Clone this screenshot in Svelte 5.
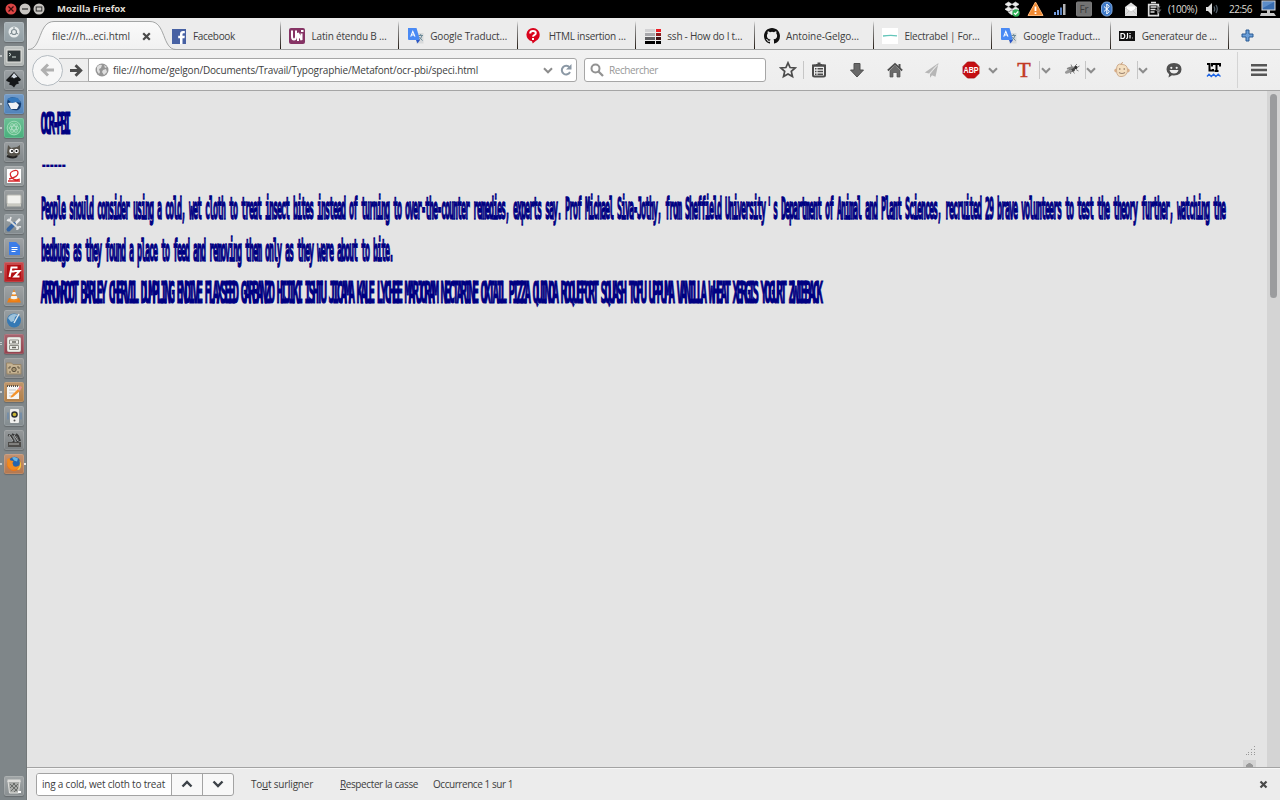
<script>
  const svg = (w, h, body, box = `0 0 ${w} ${h}`) =>
    `<svg xmlns="http://www.w3.org/2000/svg" width="${w}" height="${h}" viewBox="${box}">${body}</svg>`;

  // Spreads the letters of a label so that it fills the given width.
  function fit(node, width) {
    const range = document.createRange();
    range.selectNodeContents(node);
    const natural = range.getBoundingClientRect().width;
    const count = [...node.textContent].length;
    node.style.letterSpacing = `${(width - natural) / count}px`;
  }

  const translate = svg(16, 16, `<path d="M8 5h7.5v10.5H8z" fill="#d8dadb"/><path d="M0 0h8.5l3.500 12H1q-1 0-1-1z" fill="#4a8af4"/><path d="M8 12h4l-2.500 3.600z" fill="#2a56c6"/><path d="M2.700 8.600 4.800 3.400 7 8.600M3.400 7h2.900" stroke="#fff" fill="none" stroke-width="1.100"/><path d="M10.500 7.500h4.500M12.700 6v1.500M14 7.500q-1 3.500-3 4.500M11.300 9l3.200 3.600" stroke="#6d8a99" fill="none"/>`);

  const tabs = [
    { text: 'Facebook', w: 42, icon: svg(16, 15, `<path d="M1 0h14v15H1z" fill="#4761a3"/><path d="M9 15V9.300H7.200V6.800H9V5q0-3 3-3h1.800v2.300h-1.300q-1 0-1 1v1.500h2.300l-.3 2.500h-2V15z" fill="#fff"/>`) },
    { text: 'Latin étendu B …', w: 75, icon: svg(16, 16, `<rect width="16" height="16" rx="2" fill="#863465"/><path d="M3 2.500v6q0 3 2 3t2-3v-6M9 13V5l3.500 7V5.500" stroke="#fff" stroke-width="2" fill="none"/><path d="M12 2h2.500v2H12z" fill="#fff"/>`) },
    { text: 'Google Traduct…', w: 77, icon: translate },
    { text: 'HTML insertion …', w: 77, icon: svg(16, 16, `<path d="M7 0a6.600 6.600 0 0 1 6.700 6.700q0 4-3.700 6L6.700 15.500 6 13.300A6.700 6.700 0 0 1 7 0z" fill="#d9041d"/><path d="M4.200 5.500q0-2.400 2.800-2.400t2.800 2q0 1.400-1.500 2.100-1.200.6-1.200 1.600M7 10v2" stroke="#fff" stroke-width="2" fill="none"/>`) },
    { text: 'ssh - How do I t…', w: 75, icon: svg(16, 16, `<path d="M0 1h10v3H0z" fill="#d2d2d4"/><path d="M0 5h10v3H0z" fill="#a8a8ac"/><path d="M0 9h10v3H0z" fill="#606063"/><path d="M0 13h10v3H0z"/><path d="M11 1h5v3h-5z" fill="#ed1c24"/><path d="M11 5h5v3h-5z" fill="#8f1a1d"/><path d="M11 9h5v3h-5z" fill="#3b1112"/><path d="M11 13h5v3h-5z"/>`) },
    { text: 'Antoine-Gelgo…', w: 73, icon: svg(16, 16, `<path fill="#111" d="M8 0C3.58 0 0 3.58 0 8c0 3.54 2.29 6.53 5.47 7.59.4.07.55-.17.55-.38 0-.19-.01-.82-.01-1.49-2.01.37-2.53-.49-2.69-.94-.09-.23-.48-.94-.82-1.13-.28-.15-.68-.52-.01-.53.63-.01 1.08.58 1.23.82.72 1.21 1.87.87 2.33.66.07-.52.28-.87.51-1.07-1.78-.2-3.64-.89-3.64-3.95 0-.87.31-1.59.82-2.15-.08-.2-.36-1.02.08-2.12 0 0 .67-.21 2.2.82a7.6 7.6 0 0 1 4 0c1.53-1.04 2.2-.82 2.2-.82.44 1.1.16 1.92.08 2.12.51.56.82 1.27.82 2.15 0 3.07-1.87 3.75-3.65 3.95.29.25.54.73.54 1.48 0 1.07-.01 1.93-.01 2.2 0 .21.15.46.55.38A8 8 0 0 0 16 8c0-4.42-3.58-8-8-8z"/>`) },
    { text: 'Electrabel | For…', w: 75, icon: svg(16, 16, `<path d="M0 0h16v16H0z" fill="#fff"/><path d="M1 8q7-1 14-.2" stroke="#62c5b9" stroke-width="1.300" fill="none"/>`) },
    { text: 'Google Traduct…', w: 77, icon: translate },
    { text: 'Generateur de …', w: 75, icon: svg(16, 16, `<path d="M0 3h16v10H0z" fill="#101010"/><path d="M2 5.500h1.500q2.300 0 2.300 2.500T3.500 10.500H2zM8.500 5v4.500q0 1-1.500 1M11 7v3.500M11 5v1" stroke="#fff" stroke-width="1.200" fill="none"/><path d="M13 10h1" stroke="#aaa"/>`) },
  ];

  const chevron = svg(10, 7, `<path d="M1 1.200 5 5.300 9 1.200" fill="none" stroke="#8c8c8c" stroke-width="2"/>`);
  const sep = svg(1, 20, `<path d="M0 1h1v18H0z" fill="#c6c6c6"/>`);

  const tools = [
    { w: 24, icon: svg(18, 18, `<path d="m9 1.800 2.100 4.700 5.100.5-3.900 3.400 1.200 5.100L9 12.900l-4.500 2.600 1.200-5.100L1.800 7l5.100-.5z" fill="none" stroke="#4b4b4b" stroke-width="1.700"/>`) },
    { w: 7, icon: sep },
    { w: 24, icon: svg(16, 16, `<path d="M5 3.500V2h1.500V.5h3V2H11v1.500z" fill="#4b4b4b"/><rect x="2" y="3.500" width="12" height="11" rx="1.500" fill="#eee" stroke="#4b4b4b" stroke-width="2"/><path d="M1 2.500h14v2H1zM4 6h1.500v1.500H4zm2.500 0H12v1.500H6.500zM4 8.700h1.500v1.500H4zm2.500 0H12v1.500H6.500zM4 11.400h1.500v1.500H4zm2.500 0H12v1.500H6.500z" fill="#4b4b4b"/>`) },
    { w: 52, icon: svg(16, 16, `<path d="M5 1.500h6V8h3.500L8 15 1.500 8H5z" fill="#686868" stroke="#505050"/>`) },
    { w: 24, icon: svg(16, 16, `<path d="M3 8.500 8 4l5 4.500V15h-3v-4.500H6V15H3z" fill="#6b6b6b" stroke="#505050" stroke-width=".7"/><path d="M.8 8.500 8 2l7.200 6.500" fill="none" stroke="#4f4f4f" stroke-width="1.700"/><path d="M11.500 2h2v4h-2z" fill="#505050"/>`) },
    { w: 50, icon: svg(16, 16, `<path d="M14.500 1 .8 10.500l4.200 1zM14.500 1 6 12v3.800l2-2.500 3.500 1.500z" fill="#b6b6b6"/><path d="m13.500 3-8 9" stroke="#e2e2e2"/>`) },
    { w: 28, icon: svg(18, 18, `<path d="M5.500 1h7L17 5.500v7L12.500 17h-7L1 12.500v-7z" fill="#c50e12" stroke="#a4090c" stroke-width=".8"/><text x="9" y="12" text-anchor="middle" font-family="Liberation Sans" font-weight="bold" font-size="8.500" textLength="15" lengthAdjust="spacingAndGlyphs" fill="#fff">ABP</text>`) },
    { w: 16, icon: chevron },
    { ml: 11, w: 24, icon: svg(20, 28, `<text x="10" y="21" text-anchor="middle" font-family="Liberation Serif" font-size="22" fill="#c23a25" stroke="#c23a25" stroke-width=".5">T</text>`) },
    { w: 6, icon: sep },
    { w: 7, icon: chevron },
    { ml: 11, w: 24, icon: svg(16, 16, `<ellipse cx="8" cy="7.500" rx="3" ry="2.300" fill="#444"/><circle cx="11.700" cy="5.500" r="1.700" fill="#333"/><ellipse cx="4.500" cy="9.500" rx="3.800" ry="1.700" fill="#999" transform="rotate(-25 4.500 9.500)"/><ellipse cx="6.500" cy="6" rx="3.800" ry="1.200" fill="#888" transform="rotate(-15 6.500 6)"/><path d="M8 5 7 2.500M11 4l2-2M13 5.500l2.500-1.500M12 7.500l2.500 1.500M9 9.500l1.500 2M7 9.500l-.5 2.500" fill="none" stroke="#666" stroke-width=".8"/>`) },
    { w: 3, icon: sep },
    { w: 8, icon: chevron },
    { ml: 15, w: 24, icon: svg(16, 16, `<circle cx="2.300" cy="8.500" r="2" fill="#d9ae87"/><circle cx="13.700" cy="8.500" r="2" fill="#d9ae87"/><path d="M8 2.500q5.500 0 5.500 5.500T8 14.500 2.500 8 8 2.500z" fill="#f4dfc0" stroke="#cfae90"/><path d="M7 2.500q0-1.500 2-2" stroke="#c69a72" fill="none"/><path d="M5.800 6v2M10.200 6v2M5 10.500q3 2 6 0" stroke="#9d8572" stroke-width="1.100" fill="none"/>`) },
    { w: 7, icon: sep },
    { w: 4, icon: chevron },
    { ml: 17, w: 24, icon: svg(16, 16, `<path d="M8 1q7.500.5 7.500 6.300T8 13.500q-1 0-2-.2L2.500 15.500l.6-3.300Q.5 10.500.5 7.300.5 1.500 8 1z" fill="#505050"/><circle cx="5.300" cy="5.800" r="1.100" fill="#eee"/><circle cx="10.700" cy="5.800" r="1.100" fill="#eee"/><path d="M3.500 8h9q-1 3.500-4.500 3.500T3.500 8z" fill="#eee"/>`) },
    { ml: 16, w: 24, icon: svg(16, 16, `<path d="M1 2h2.500v6.500H7V7M6 4.500V2h8v2.500M10.500 2v7M8.500 9h4" fill="none" stroke="#000" stroke-width="2"/><path d="m1 14.500 2-2.300 2.300 2.300 2.300-2.300 2.300 2.300 2.300-2.300 2.300 2.300" fill="none" stroke="#1f66e5" stroke-width="1.300"/>`) },
    { w: 22, icon: svg(1, 36, `<path d="M0 0h1v36H0z" fill="#d4d4d4"/>`) },
    { w: 22, icon: svg(16, 14, `<path d="M0 1h16v2.500H0zM0 5.700h16v2.500H0zM0 10.500h16V13H0z" fill="#555"/>`) },
  ];

  const tray = [
    { w: 24, icon: svg(16, 16, `<path d="m4.500 1 3.500 2.300L4.500 5.600 1 3.300zM11.500 1 15 3.300l-3.500 2.300L8 3.300zM4.500 5.900 8 8.200l-3.500 2.300L1 8.200zM11.500 5.900 15 8.200l-3.500 2.300L8 8.200zM4.500 11.500 8 9.300l3.500 2.200L8 14z" fill="#ececec" stroke="#ececec" stroke-width=".6"/><circle cx="12" cy="12" r="3.700" fill="#2fb157"/><path d="m10 12 1.500 1.500 2.700-3" stroke="#fff" stroke-width="1.200" fill="none"/>`) },
    { w: 22, icon: svg(17, 16, `<path d="M8.500 1 16 14.500H1z" fill="#f18a32" stroke="#ffb676" stroke-linejoin="round"/><path d="M8.500 5.500V10M8.500 11.300V13" stroke="#fff" stroke-width="1.800"/>`) },
    { w: 28, icon: svg(14, 12, `<path d="M1 9h2v3H1zM4 7h2v5H4z" fill="#739cdd"/><path d="M7 4.500h2V12H7z" fill="#567dbb"/><path d="M10 1h2.500v11H10z" fill="#b5b5b5"/>`) },
    { w: 20, icon: svg(16, 16, `<rect x=".5" y="1" width="15" height="14" rx="1" fill="#727272" stroke="#7b7b7b"/><text x="8" y="12" text-anchor="middle" font-family="Open Sans" font-size="10" fill="#3a3a3a">Fr</text>`) },
    { w: 26, icon: svg(12, 16, `<rect x=".5" y="1" width="10.500" height="14" rx="5" fill="#3d79c8" stroke="#80a9de"/><path d="m3 5.500 5.300 5L5.800 13V3l2.500 2.500-5.300 5" fill="none" stroke="#fff"/>`) },
    { w: 22, icon: svg(14, 16, `<path d="M1 6 7 1.500 13 6v9H1z" fill="#dcdcdc"/><path d="M3 5.500h8V9l-4 2-4-2z" fill="#fff"/><path d="m1 7 6 4 6-4M1 14l4-4M13 14l-4-4" fill="none" stroke="#bbb" stroke-width=".7"/>`) },
    { w: 26, icon: svg(16, 16, `<path d="M4 1.500h5M1.700 3.700h9.600v11H1.700z" fill="none" stroke="#dedede" stroke-width="1.700"/><path d="M3.500 6h6M3.500 8.500h5M3.500 11h4" stroke="#dedede" stroke-width="1.400"/><path d="m12 5-3.500 5h3l-2 5 5-6.500h-3l2-3.500z" fill="#666"/>`) },
  ];

  const launcher = [
    { name: 'Accueil', bg: '#8f9ca2', icon: `<circle cx="10" cy="10" r="5.500" fill="#e8eced"/><circle cx="10" cy="10" r="2.500" fill="none" stroke="#7e8b91" stroke-width="1.200"/><path d="M10 5v2M5.800 12l2-1M14.200 12l-2-1" stroke="#7e8b91"/>` },
    { name: 'Terminal', bg: '#adb2b0', run: 1, icon: `<rect x="3" y="4" width="14" height="12" fill="#30383a" stroke="#e5e5e1"/><path d="m5 7 2 1.500L5 10M8 11h4" stroke="#d7e4dd" fill="none"/>` },
    { name: 'Inkscape', bg: '#7f868a', icon: `<path d="M10 2 17 9.500q0 1.500-3 2l1 2-3 1-2 3-2-2-3-1 1-2-3.500-1.500Q1.500 10 3 9z" fill="#151719"/><path d="m10 3 3.500 4-2 .5-1.500 1-2-1.500-1.500 1z" fill="#d4dbe3"/>` },
    { name: 'Thunderbird', bg: '#4b7fb8', run: 1, icon: `<path d="M4 5q3-3 8-1l5 4q1 5-3 8-6 1-9-3-3-4-1-8z" fill="#173d6e"/><path d="m4 9 8-1 3 3-2 4-6 0z" fill="#f0f3f6"/><path d="M3 5q5-3 11-1l3 5-5-1-4 1z" fill="#3478bd"/>` },
    { name: 'Atom', bg: '#42ad78', run: 1, icon: `<circle cx="10" cy="10" r="7.500" fill="#66c18d"/><g fill="none" stroke="#b5e2ca" stroke-width=".7"><circle cx="10" cy="10" r="6.800"/><ellipse cx="10" cy="10" rx="5" ry="2"/><ellipse cx="10" cy="10" rx="5" ry="2" transform="rotate(60 10 10)"/><ellipse cx="10" cy="10" rx="5" ry="2" transform="rotate(120 10 10)"/></g>` },
    { name: 'GIMP', bg: '#7d8386', icon: `<path d="m4 3 3 3 6-1 3-2v9l-5 4-6-1-2-4z" fill="#57544c"/><circle cx="7.500" cy="9" r="2.300" fill="#fff"/><circle cx="12.500" cy="9" r="2.300" fill="#fff"/><circle cx="8" cy="9" r="1"/><circle cx="12.500" cy="9" r="1"/><path d="M3 14q7 3 10 0" stroke="#222" stroke-width="2" fill="none"/>` },
    { name: 'PDF', bg: '#8b9193', icon: `<path d="M3 3h14v14H3z" fill="#fff"/><path d="M5 13q9-2 9-6t-5-2-1 7q3 3 8 1M4 15h12" stroke="#d7262b" fill="none" stroke-width="1.300"/>` },
    { name: 'Scanner', bg: '#7f8486', icon: `<rect x="3" y="5" width="14" height="9" rx="1" fill="#f1f1ed" stroke="#b9b9b2"/><path d="M3 14h14v2.500H3z" fill="#c9c9c1"/>` },
    { name: 'Outils', bg: '#7f878b', icon: `<path d="m16 5-6 6" stroke="#eceded" stroke-width="2.500"/><path d="m10 10-5.500 5.500" stroke="#3665a3" stroke-width="4" stroke-linecap="round"/><path d="m4 5 11 10" stroke="#d6dadb" stroke-width="2"/><path d="M3 6q3 2 4-3M13 16q0-4 4-3" fill="none" stroke="#e8e8e8" stroke-width="1.600"/>` },
    { name: 'Documents', bg: '#84898d', icon: `<path d="M5 4h7l4 4v9H5z" fill="#3c7de8"/><path d="M7.500 9.500h6M7.500 11.500h6M7.500 13.500h4" stroke="#fff"/>` },
    { name: 'FileZilla', bg: '#b6191d', run: 1, icon: `<path d="M3 3h14v14H3z" fill="#b30f13"/><path d="m5.500 15 2-9.500h6M6.500 9.500h4M10.500 9h5l-5 5.500h5" fill="none" stroke="#fff" stroke-width="2"/>` },
    { name: 'VLC', bg: '#84898b', icon: `<path d="m3 16.500 2-4.500h10l2 4.500z" fill="#ec7d15"/><path d="M10 3 14 14q-4 2-8 0z" fill="#f08b22"/><path d="m8.700 6-.8 2q2 1 4.200 0l-.8-2zM7.300 10l-.8 2.500q3.500 1.500 7 0l-.8-2.500z" fill="#f3f3ee"/>` },
    { name: 'Scribus', bg: '#7c8488', icon: `<circle cx="10" cy="10.500" r="7" fill="#3579b4"/><path d="M4 8q4-6 10-3l-3 2-1 4-3 1z" fill="#9dc2db"/><path d="m15 4-5 9" stroke="#dfe8ee" stroke-width="1.500"/>` },
    { name: 'Archives', bg: '#8f3b47', run: 2, icon: `<rect x="3.500" y="3.500" width="13" height="14" rx="1" fill="#eeeee9" stroke="#d5d5cf"/><path d="M5.500 6h9v4h-9zM5.500 11.500h9v4h-9z" fill="none" stroke="#8c8c84"/><path d="M8 8h4M8 13.500h4" stroke="#66665e" stroke-width="1.300"/>` },
    { name: 'Images', bg: '#7d7e7d', icon: `<path d="M2.500 5h5l1.500 1.500h8V16h-14z" fill="#c7b493" stroke="#988567"/><path d="M5 9h2M5 9v2M15 9h-2M15 9v2M5 14h2M15 14h-2" stroke="#685b45" fill="none"/><circle cx="10" cy="11.500" r="2.200" fill="#a39170" stroke="#5c513f"/>` },
    { name: 'Gedit', bg: '#ae7a42', run: 1, icon: `<path d="M3 4h12v13H3z" fill="#f6f6f4"/><path d="M3 4h12" stroke="#58534c" stroke-dasharray="1 1" stroke-width="2"/><path d="M5 8h7M5 11h5M5 14h3" stroke="#c3c3c3"/><path d="m7 14 7-7 2 2-7 6-2.500.7z" fill="#f3942c"/><path d="m14 7 2-3 2 1-2 4z" fill="#ed8d91"/>` },
    { name: 'Son', bg: '#7f888c', icon: `<path d="M4 6.500v7M17 6.500v7" stroke="#6788ad" stroke-width="1.300"/><rect x="6" y="3" width="9" height="14" rx="1" fill="#f0f0ee"/><circle cx="10.500" cy="8.500" r="3.300" fill="#2c2f33"/><circle cx="10.500" cy="8.500" r="1.800" fill="#c8b532"/><circle cx="10.500" cy="14.500" r="1" fill="#555"/>` },
    { name: 'Moteur', bg: '#777c7e', icon: `<path d="M4 12h13v5H4z" fill="#4e4c49"/><path d="m4 5 3 1 3 6M8 4l3 2 3 6M12 4l2 2 2 5" stroke="#383838" stroke-width="2" fill="none"/><path d="m5 5 4 6M10 5l4 6M5 14h10" stroke="#b4b5b4" fill="none"/>` },
    { name: 'Firefox', bg: '#b27349', run: 1, focus: 1, icon: `<circle cx="10" cy="10" r="7.200" fill="#ea771b"/><circle cx="10.500" cy="8.500" r="5.800" fill="#2465ad"/><path d="M8 3.500q3-1.500 6 1l-1 3-3-1z" fill="#69b4e3"/><path d="M3 5.500 5 4l1.500 2.500 3 .5-1 2 1 3q3 1.500 5.500-.5 0 3-4 4-5 1-7.500-4z" fill="#f08b22"/><path d="M13 15.500q4-3 2.500-9.500 3.500 6-.5 10z" fill="#f9c63b"/>` },
  ];

  const specimen = [
    { text: 'OCR-PBI', kind: 'caps' },
    { text: '------', kind: 'rule' },
    { before: 'People should consider using a cold, wet cloth to treat insect bites instead of turning to over-the-counter remedies, experts say. Prof Michael Siva-Jothy, from Sheffield University', mark: "'", text: 's Department of Animal and Plant Sciences, recruited 29 brave volunteers to test the theory further, watching the' },
    { text: 'bedbugs as they found a place to feed and removing them only as they were about to bite.' },
    { text: 'ARROWROOT BARLEY CHERVIL DUMPLING ENDIVE FLAXSEED GARBANZO HIJIKI ISHTU JICAMA KALE LYCHEE MARJORAM NECTARINE OXTAIL PIZZA QUINOA ROQUEFORT SQUASH TOFU UPPUMA VANILLA WHEAT XERGIS YOGURT ZWIEBACK', kind: 'caps' },
  ];
</script>

<div class="screen">
  <header class="panel">
    <div class="controls">
      {@html svg(12, 12, '<circle cx="6" cy="6" r="5.500" fill="#dc4544"/><path d="m3.500 3.500 5 5m0-5-5 5" stroke="#3d0d0d" stroke-width="1.200"/>')}
      {@html svg(12, 12, '<circle cx="6" cy="6" r="5.500" fill="#c8c5c1"/><path d="M3 6h6" stroke="#333" stroke-width="1.300"/>')}
      {@html svg(12, 12, '<circle cx="6" cy="6" r="5.500" fill="#c8c5c1"/><rect x="3.200" y="4" width="5.600" height="4" fill="none" stroke="#333"/>')}
    </div>
    <b use:fit={68.5}>Mozilla Firefox</b>
    <div class="tray">
      {#each tray as t}<span class="cell" style:width="{t.w}px">{@html t.icon}</span>{/each}
      <span class="battery" use:fit={29}>(100%)</span>
      <span class="cell sound">{@html svg(14, 16, '<path d="M1 6h2l4-4v12l-4-4H1z" fill="#ddd"/><path d="M9 5.500q1.500 2.500 0 5M11 4q2.500 4 0 8" fill="none" stroke="#53606b" stroke-width="1.300"/>')}</span>
      <span class="clock" use:fit={23}>22:56</span>
      <span class="cell session">{@html svg(17, 17, '<rect x="2" y="1" width="13" height="9" fill="#386cae" stroke="#dedede"/><path d="M7 10h3v3H7zM1 13h13l2 3H0z" fill="#c8c8c8"/><path d="M3 2h11L3 8z" fill="#5b8cc8"/>')}</span>
    </div>
  </header>

  <div class="desktop">
    <nav class="launcher">
      {#each launcher as app}
        <div class="app" class:run={app.run} class:double={app.run === 2} class:focus={app.focus}>
          <span class="tile" style:background-color={app.bg}>{@html svg(20, 20, app.icon)}</span>
        </div>
      {/each}
      <div class="app trash"><span class="tile">{@html svg(20, 20, '<path d="m4 5 1.500 12h9L16 5z" fill="#a9aba8" stroke="#e1e1de"/><path d="m6 8 7 7M9 7l5 5M14 8l-7 7M11 7l-5 5M14 12l-4 4" stroke="#5b5d5b" stroke-width=".8"/><path d="M3.500 3.500h13V6h-13z" fill="#dededb"/><path d="M14 15h3v2h-3z" fill="#fff"/>')}</span></div>
    </nav>

    <main class="window">
      <div class="tabs">
        <div class="tab active">
          <svg class="shape" width="149" height="29" viewBox="0 0 149 29"><defs><linearGradient id="tabfill" x2="0" y2="1"><stop offset="0" stop-color="#fafafa" /><stop offset="1" stop-color="#f1f1f1" /></linearGradient></defs><path d="M0 28.500C14 28.500 10 .5 26 .5h96c16 0 12 28 26 28" fill="url(#tabfill)" stroke="#a3a5a5" /></svg>
          <span class="label" use:fit={78}>file:///h…eci.html</span>
          <span class="close">{@html svg(9, 9, '<path d="m1.200 1.200 6.600 6.600m0-6.600L1.200 7.800" stroke="#494949" stroke-width="2.200"/>')}</span>
        </div>
        {#each tabs as tab}
          <div class="tab">
            <span class="icon">{@html tab.icon}</span>
            <span class="label" use:fit={tab.w}>{tab.text}</span>
          </div>
        {/each}
        <span class="new">{@html svg(13, 13, '<path d="M5 1h3v4h4v3H8v4H5V8H1V5h4z" fill="#6c9fd8" stroke="#285b94"/>')}</span>
      </div>

      <div class="toolbar">
        <div class="back">{@html svg(15, 14, '<path d="M14 7H3M8 1.500 2.500 7 8 12.500" fill="none" stroke="#b0b0b0" stroke-width="3"/>')}</div>
        <div class="forward">{@html svg(13, 13, '<path d="M0 6.500h10M5.500 1.200l5.300 5.300-5.300 5.300" fill="none" stroke="#4b4b4b" stroke-width="2.800"/>')}</div>
        <div class="address">
          {@html svg(14, 14, '<circle cx="7" cy="7" r="6.500" fill="#969696"/><path d="M2 4q2-3 5-2l-1 3-2 1 1 3-1 2-2-3zM8 7l3-1 1 3-3 3-2-3zM9 2l3 2-2 1z" fill="#dfdfdf"/>')}
          <span class="url" use:fit={365}>file:///home/gelgon/Documents/Travail/Typographie/Metafont/ocr-pbi/speci.html</span>
          <span class="drop">{@html chevron}</span>
          {@html svg(12, 12, '<path d="M9.500 3.500A4.300 4.300 0 1 0 10 8" fill="none" stroke="#8b98a5" stroke-width="2"/><path d="M11.500 0v5.500H6z" fill="#8b98a5"/>')}
        </div>
        <div class="search">
          {@html svg(14, 14, '<circle cx="5.500" cy="5.500" r="4" fill="none" stroke="#929292" stroke-width="2"/><path d="m8.500 8.500 4.500 4.500" stroke="#929292" stroke-width="2.300"/>')}
          <span use:fit={49}>Rechercher</span>
        </div>
        <div class="tools">
          {#each tools as t}<span class="cell" style:width="{t.w}px" style:margin-left="{t.ml ?? 0}px">{@html t.icon}</span>{/each}
        </div>
      </div>

      <section class="view">
        <article>
          {#each specimen as line}
            <p class={line.kind}>{#if line.before}{line.before}<i>{line.mark}</i>{/if}{line.text}</p>
          {/each}
        </article>
        <div class="corner">
          {@html svg(10, 10, '<path d="M8 0h1v1H8zM8 3h1v1H8zM5 3h1v1H5zM8 6h1v1H8zM5 6h1v1H5zM2 6h1v1H2zM8 8h1v1H8zM5 8h1v1H5zM2 8h1v1H2zM0 8h1v1H0z" fill="#999"/>')}
          <span class="stub"></span>
        </div>
        <div class="scrollbar"><div class="thumb"></div></div>
      </section>

      <footer class="find">
        <div class="group">
          <div class="field"><span use:fit={123}>ing a cold, wet cloth to treat</span></div>
          <div class="step">{@html svg(12, 8, '<path d="m1.500 6.500 4.500-4.500 4.500 4.500" fill="none" stroke="#3c4248" stroke-width="2.400"/>')}</div>
          <div class="step">{@html svg(12, 8, '<path d="m1.500 1.500 4.500 4.500 4.500-4.500" fill="none" stroke="#3c4248" stroke-width="2.400"/>')}</div>
        </div>
        <span class="all" use:fit={62}>To<u>u</u>t surligner</span>
        <span class="case" use:fit={78}><u>R</u>especter la casse</span>
        <span class="count" use:fit={80}>Occurrence 1 sur 1</span>
        <span class="end">{@html svg(9, 9, '<path d="m1.500 1.500 6 6m0-6-6 6" stroke="#494949" stroke-width="2.200"/>')}</span>
      </footer>
    </main>
  </div>
</div>

<style>
  :global(body) { margin: 0; overflow: hidden; }
  .screen { width: 1280px; height: 800px; display: flex; flex-direction: column; overflow: hidden; background: #ececec; font: 10px/14px "Open Sans", "Noto Sans", sans-serif; color: #3d3d3d; white-space: nowrap; }
  .screen :global(svg) { display: block; flex: none; }
  .panel { height: 18px; flex: none; display: flex; align-items: center; background: #000; color: #dfdbd2; box-sizing: border-box; padding: 0 0 1px 5px; }
  .controls { display: flex; gap: 2px; width: 52px; }
  .panel b { font-size: 9.5px; }
  .tray { display: flex; align-items: center; width: 280px; margin-left: auto; }
  .cell { display: flex; flex: none; justify-content: center; align-items: center; }
  .battery { width: 30px; }
  .sound { width: 28px; }
  .clock { width: 23px; margin-left: 3px; }
  .session { width: 24px; margin-left: 4px; }
  .desktop { flex: 1; display: flex; min-height: 0; }
  .launcher { width: 27px; flex: none; display: flex; flex-direction: column; padding-top: 2px; box-sizing: border-box; background: linear-gradient(#666b6d, #7f8689 20px, #7f8689); border-right: 1px solid #737879; }
  .app { height: 24px; display: flex; align-items: center; padding-left: 4px; position: relative; }
  .app.trash { margin-top: auto; margin-bottom: 2px; }
  .tile { width: 20px; height: 20px; border-radius: 2px; background-color: #868c8e; background-image: linear-gradient(#ffffff38, #ffffff08); box-shadow: inset 0 0 0 1px #ffffff22, 0 1px 1px #0003; }
  .run::before { content: ''; position: absolute; left: 0; top: 11px; width: 2px; height: 2px; background: #c5c9ca; }
  .double::before { height: 1px; top: 10px; box-shadow: 0 2px #c5c9ca; }
  .focus::after { content: ''; position: absolute; right: 0; top: 11px; width: 2px; height: 2px; background: #e8e8e8; }
  .window { flex: 1; min-width: 0; display: flex; flex-direction: column; border-left: 1px solid #f3f3f3; box-sizing: border-box; }
  .tabs { height: 32px; flex: none; display: flex; box-sizing: border-box; border-bottom: 1px solid #a3a5a5; background: #ececec; }
  .tab { width: 118.6px; flex: none; display: flex; align-items: center; box-sizing: border-box; padding: 5px 0 0 8.6px; border-right: 1px solid; border-image: linear-gradient(transparent 12%, #999 30%, #1d150e) 1; }
  .tab.active { width: 134px; position: relative; padding-left: 24px; border: 0; }
  .shape { position: absolute; left: 0; top: 3px; }
  .tab .label { position: relative; }
  .active .close { position: relative; margin-left: 12px; }
  .icon { width: 22.4px; }
  .new { align-self: center; margin: 4px 0 0 12px; }
  .toolbar { height: 41px; flex: none; display: flex; align-items: center; box-sizing: border-box; border-bottom: 1px solid #a5a5a5; background: linear-gradient(#f1f1f1, #ededed); }
  .back { width: 31px; height: 31px; box-sizing: border-box; margin-left: 4px; border: 1px solid #b4bbc1; border-radius: 50%; background: #f7f7f7; display: flex; align-items: center; justify-content: center; z-index: 1; }
  .forward { width: 30px; height: 24px; box-sizing: border-box; margin-left: -4px; border: 1px solid #b5b5b5; border-width: 1px 0; background: #eee; display: flex; align-items: center; justify-content: flex-end; padding-right: 6px; }
  .address { width: 489px; height: 24px; box-sizing: border-box; padding: 0 4px 0 6px; border: 1px solid #a6a6a6; border-radius: 0 3px 3px 0; background: #fff; display: flex; align-items: center; margin-left: -1px; }
  .url { margin-left: 4px; }
  .drop { margin: 0 7px 0 auto; }
  .search { width: 182px; height: 24px; box-sizing: border-box; margin-left: 7px; padding-left: 5px; border: 1px solid #a6a6a6; border-radius: 3px; background: #fff; display: flex; align-items: center; gap: 5px; color: #979797; }
  .tools { display: flex; align-items: center; margin-left: 10px; height: 30px; }
  .view { flex: 1; min-height: 0; display: flex; background: #e4e4e4; overflow: hidden; border-bottom: 1px solid #a3a3a3; margin-left: -1px; }
  article { flex: 1; min-width: 0; padding: 12px 0 0 14px; overflow: hidden; color: #000082; font: bold 30px/42.3px "DejaVu Sans Mono", monospace; }
  article p { margin: 0; width: max-content; transform: scaleX(.28); transform-origin: 0 0; letter-spacing: -3.775px; -webkit-text-stroke: 1.4px #000082; }
  article p.caps { transform: translateX(-.5px) scaleX(.36); letter-spacing: -6.95px; -webkit-text-stroke-width: 1.2px; }
  article p.rule { transform: translate(-1px, -2.5px) scaleX(.42); letter-spacing: -8.54px; font-weight: normal; -webkit-text-stroke-width: 0; }
  article i { font-style: normal; padding: 0 8px 0 6.3px; }
  .corner { width: 24px; display: flex; flex-direction: column; justify-content: flex-end; gap: 4px; }
  .corner :global(svg) { margin-left: 3px; }
  .stub { width: 13px; height: 7px; background: radial-gradient(circle at 6.5px 7px, #999 3.5px, #d4d4d4 4px); }
  .scrollbar { width: 13px; flex: none; background: #d4d4d4; }
  .thumb { width: 7px; height: 204px; margin: 3px 0 0 3px; border-radius: 4px; background: #9b9c9e; }
  .find { height: 32px; flex: none; display: flex; align-items: center; background: #ececec; box-shadow: inset 0 1px #f7f7f7; }
  .group { display: flex; height: 23px; box-sizing: border-box; width: 198px; margin-left: 8px; border: 1px solid #a3a3a3; border-radius: 3px; background: #f8f8f8; }
  .field { width: 134px; background: #fff; display: flex; align-items: center; padding-left: 5px; box-sizing: border-box; border-radius: 2px; }
  .step { flex: 1; border-left: 1px solid #a3a3a3; display: flex; align-items: center; justify-content: center; }
  .all { margin-left: 17px; width: 89px; }
  .case { width: 93px; }
  .end { margin: 0 12px 0 auto; }
</style>
